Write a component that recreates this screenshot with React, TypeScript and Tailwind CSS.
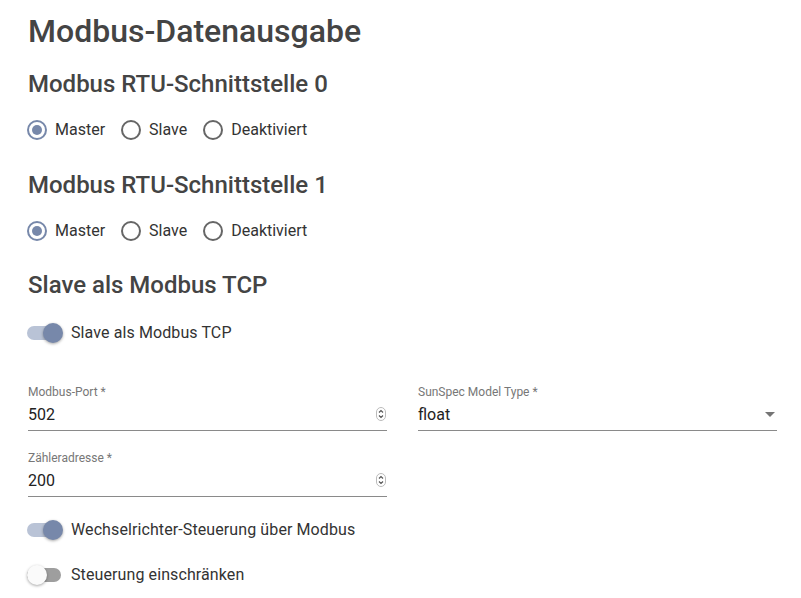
import React from "react";

const Radio: React.FC<{ checked?: boolean; label: string }> = ({ checked, label }) => (
  <label className="flex items-center gap-[8px]">
    <span
      className={`flex h-[20px] w-[20px] items-center justify-center rounded-full border-2 ${
        checked ? "border-[#7788aa]" : "border-[#666666]"
      }`}
    >
      {checked && <span className="h-[10px] w-[10px] rounded-full bg-[#7788aa]" />}
    </span>
    <span className="text-[16px] text-[#333333]">{label}</span>
  </label>
);

const RadioRow: React.FC = () => (
  <div className="flex items-center gap-[16px] pl-[27px]">
    <Radio checked label="Master" />
    <Radio label="Slave" />
    <Radio label="Deaktiviert" />
  </div>
);

const Switch: React.FC<{ on?: boolean; label: string }> = ({ on, label }) => (
  <div className="flex items-center gap-[8px] pl-[27px]">
    <span className="relative flex h-[20px] w-[36px] items-center">
      <span
        className={`h-[14px] w-[34px] rounded-full ${on ? "bg-[#b9c3d6]" : "bg-[#9e9e9e]"}`}
      />
      <span
        className={`absolute top-0 h-[20px] w-[20px] rounded-full shadow-[0_1px_3px_rgba(0,0,0,0.35)] ${
          on ? "left-[16px] bg-[#7788aa]" : "left-0 bg-[#fafafa]"
        }`}
      />
    </span>
    <span className="text-[16px] tracking-[0.1px] text-[#333333]">{label}</span>
  </div>
);

const Spinner: React.FC = () => (
  <svg width="10" height="14" viewBox="0 0 10 14" className="mb-[2px]">
    <rect x="0.5" y="0.5" width="9" height="13" rx="4.5" fill="none" stroke="#bbbbbb" />
    <path d="M3 5.5 L5 3.5 L7 5.5" fill="none" stroke="#555555" strokeWidth="1.2" />
    <path d="M3 8.5 L5 10.5 L7 8.5" fill="none" stroke="#555555" strokeWidth="1.2" />
  </svg>
);

const Field: React.FC<{ label: string; value: string; select?: boolean }> = ({ label, value, select }) => (
  <div className="flex flex-col">
    <span className="text-[12px] leading-[14px] text-[#777777]">{label}</span>
    <div className="mt-[6px] flex items-center justify-between border-b border-[#8a8a8a] pb-[6px]">
      <span className="text-[16px] leading-[19px] text-[#222222]">{value}</span>
      {select ? (
        <svg width="10" height="5" viewBox="0 0 10 5" className="mr-[2px]">
          <path d="M0 0 L10 0 L5 5 Z" fill="#757575" />
        </svg>
      ) : (
        <span className="mr-[1px]">
          <Spinner />
        </span>
      )}
    </div>
  </div>
);

export default function App() {
  return (
    <div
      className="min-h-[598px] w-[801px] bg-white text-[#444444]"
      style={{ fontFamily: "Roboto, 'Liberation Sans', sans-serif" }}
    >
      <div className="px-[28px] pt-[11px]">
        <h1 className="text-[32px] font-medium leading-[40px] text-[#444444]">Modbus-Datenausgabe</h1>

        <h2 className="mt-[19px] text-[24px] font-medium leading-[28px] text-[#444444]">
          Modbus RTU-Schnittstelle 0
        </h2>
      </div>
      <div className="mt-[20px]">
        <RadioRow />
      </div>

      <h2 className="mt-[29px] px-[28px] text-[24px] font-medium leading-[28px] text-[#444444]">
        Modbus RTU-Schnittstelle 1
      </h2>
      <div className="mt-[20px]">
        <RadioRow />
      </div>

      <h2 className="mt-[28px] px-[28px] text-[24px] font-medium leading-[28px] text-[#444444]">
        Slave als Modbus TCP
      </h2>
      <div className="mt-[22px]">
        <Switch on label="Slave als Modbus TCP" />
      </div>

      <div className="mt-[40px] grid grid-cols-2 gap-x-[31px] pl-[28px] pr-[24px]">
        <Field label="Modbus-Port *" value="502" />
        <Field label="SunSpec Model Type *" value="float" select />
        <div className="mt-[20px]">
          <Field label="Zähleradresse *" value="200" />
        </div>
      </div>

      <div className="mt-[21px]">
        <Switch on label="Wechselrichter-Steuerung über Modbus" />
      </div>
      <div className="mt-[21px]">
        <Switch label="Steuerung einschränken" />
      </div>
    </div>
  );
}
